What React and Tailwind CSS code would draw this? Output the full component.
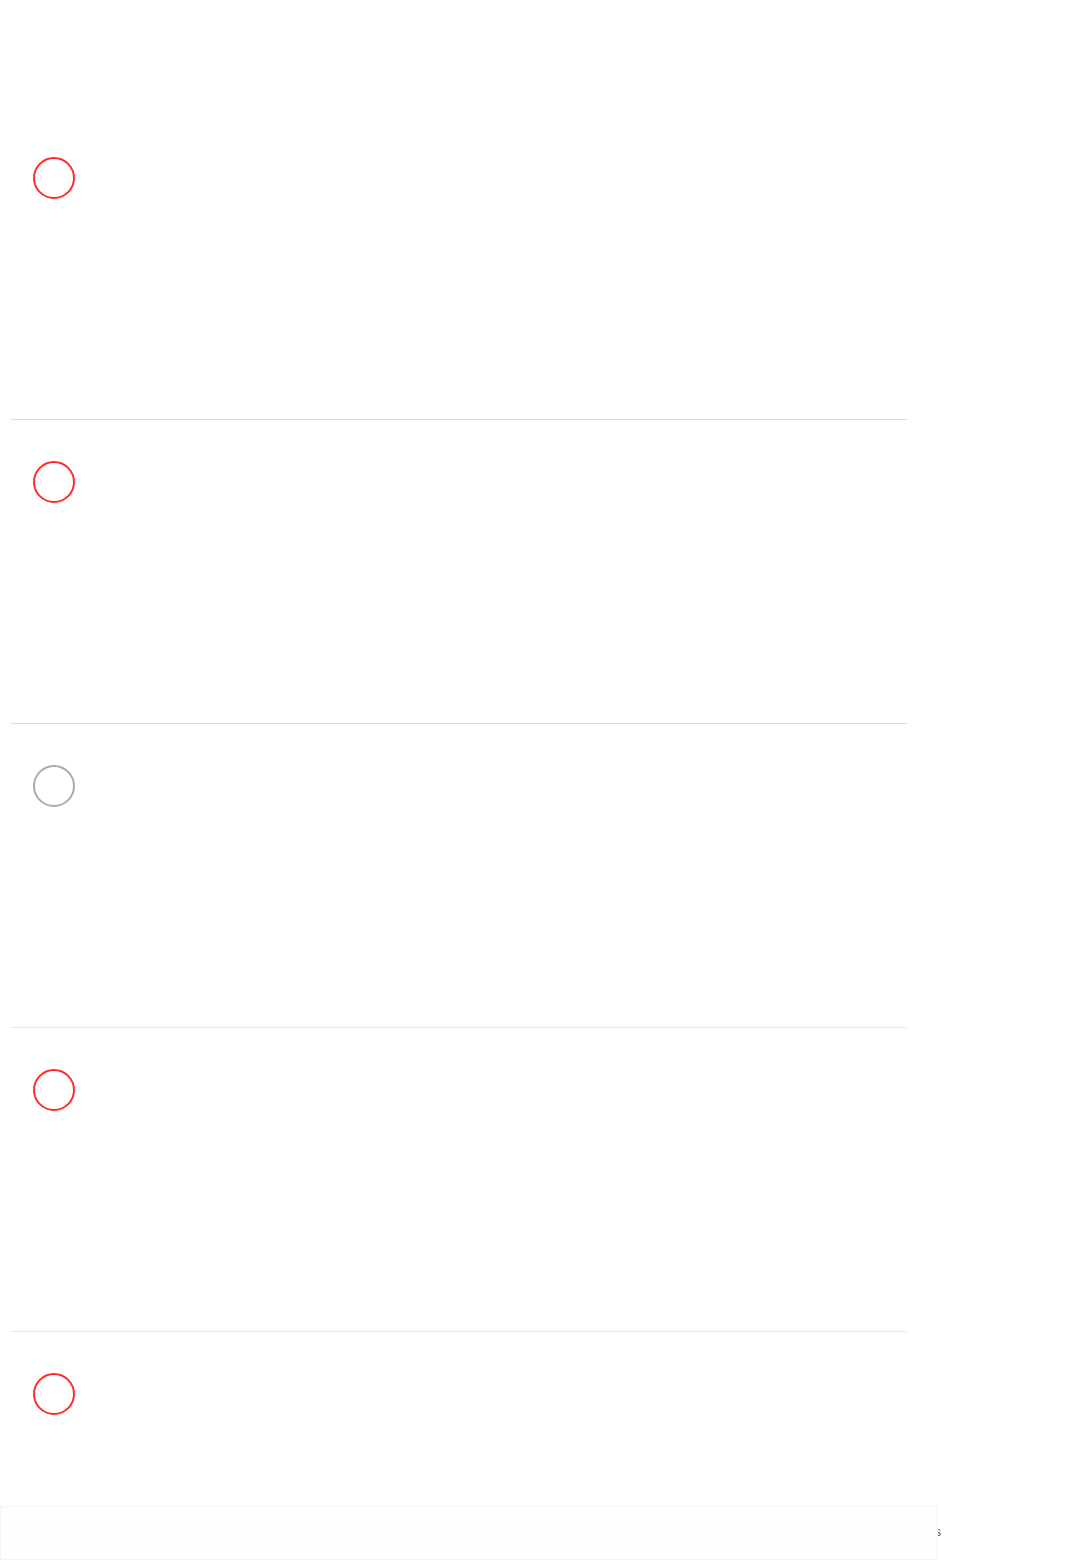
import React from 'react';

const items = [
  { id: 1, color: 'border-[#ff2b2b]', line: 'border-[#dcdcdc]' },
  { id: 2, color: 'border-[#ff2b2b]', line: 'border-[#dcdcdc]' },
  { id: 3, color: 'border-[#aaaaaa]', line: 'border-[#e6e6e6]' },
  { id: 4, color: 'border-[#ff2b2b]', line: 'border-[#e6e6e6]' },
  { id: 5, color: 'border-[#ff2b2b]', line: 'border-transparent' },
];

const App = () => {
  return (
    <div className="relative h-[1560px] w-full overflow-hidden bg-white font-['Liberation_Sans',sans-serif]">
      {/* List */}
      <div className="ml-[11px] w-[896px] pt-[116px]">
        {items.map(item => (
          <div key={item.id} className={`h-[304px] border-b ${item.line} pt-[41px] pl-[22px]`}>
            <div className={`h-[42px] w-[42px] rounded-full border-2 ${item.color}`}></div>
          </div>
        ))}
      </div>

      {/* Footer bar */}
      <span className="absolute left-[935px] top-[1525px] text-[12px] leading-[14px] text-[#555555]">s</span>
      <div className="absolute bottom-0 left-0 h-[54px] w-[938px] border border-[#f4f4f4] bg-[#fefefe]"></div>
    </div>
  );
};

export default App;
